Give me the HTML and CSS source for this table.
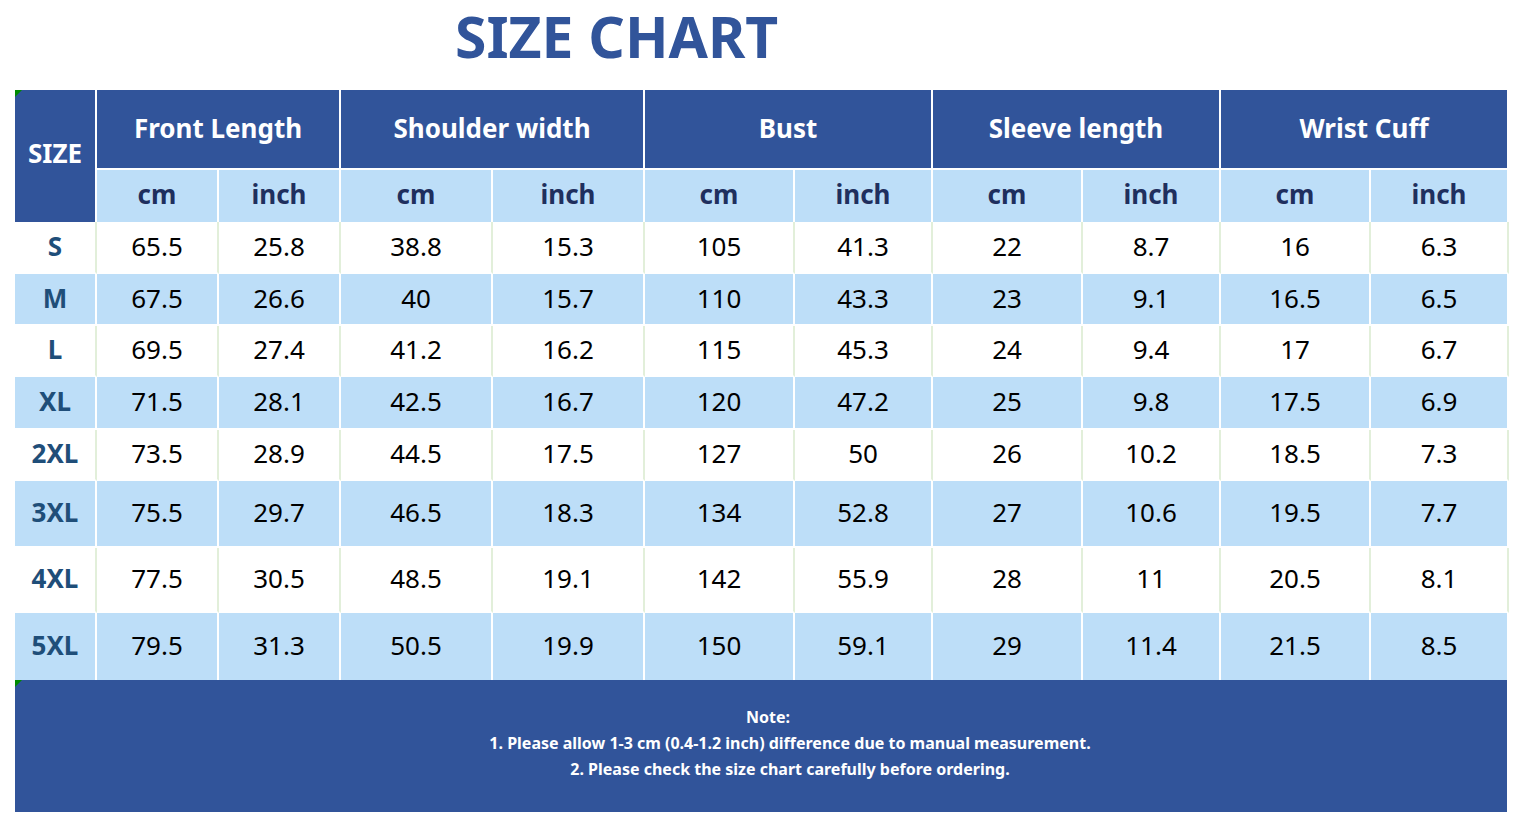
FILE: index.html
```html
<!DOCTYPE html>
<html lang="en">
<head>
<meta charset="utf-8">
<title>Size Chart</title>
<link rel="stylesheet" href="styles.css">
</head>
<body>
<div class="page">
  <div class="title-bar">
    <h1 class="title">SIZE CHART</h1>
  </div>
  <div class="chart">
    <span class="flag"></span>
    <div class="cell head size-head">SIZE</div>
    <div class="cell head group">Front Length</div>
    <div class="cell head group">Shoulder width</div>
    <div class="cell head group">Bust</div>
    <div class="cell head group">Sleeve length</div>
    <div class="cell head group">Wrist Cuff</div>

    <div class="cell sub">cm</div><div class="cell sub">inch</div>
    <div class="cell sub">cm</div><div class="cell sub">inch</div>
    <div class="cell sub">cm</div><div class="cell sub">inch</div>
    <div class="cell sub">cm</div><div class="cell sub">inch</div>
    <div class="cell sub">cm</div><div class="cell sub">inch</div>

    <div class="row plain">
      <div class="cell label">S</div>
      <div class="cell">65.5</div><div class="cell">25.8</div><div class="cell">38.8</div><div class="cell">15.3</div><div class="cell">105</div><div class="cell">41.3</div><div class="cell">22</div><div class="cell">8.7</div><div class="cell">16</div><div class="cell">6.3</div>
    </div>
    <div class="row alt">
      <div class="cell label">M</div>
      <div class="cell">67.5</div><div class="cell">26.6</div><div class="cell">40</div><div class="cell">15.7</div><div class="cell">110</div><div class="cell">43.3</div><div class="cell">23</div><div class="cell">9.1</div><div class="cell">16.5</div><div class="cell">6.5</div>
    </div>
    <div class="row plain">
      <div class="cell label">L</div>
      <div class="cell">69.5</div><div class="cell">27.4</div><div class="cell">41.2</div><div class="cell">16.2</div><div class="cell">115</div><div class="cell">45.3</div><div class="cell">24</div><div class="cell">9.4</div><div class="cell">17</div><div class="cell">6.7</div>
    </div>
    <div class="row alt">
      <div class="cell label">XL</div>
      <div class="cell">71.5</div><div class="cell">28.1</div><div class="cell">42.5</div><div class="cell">16.7</div><div class="cell">120</div><div class="cell">47.2</div><div class="cell">25</div><div class="cell">9.8</div><div class="cell">17.5</div><div class="cell">6.9</div>
    </div>
    <div class="row plain">
      <div class="cell label">2XL</div>
      <div class="cell">73.5</div><div class="cell">28.9</div><div class="cell">44.5</div><div class="cell">17.5</div><div class="cell">127</div><div class="cell">50</div><div class="cell">26</div><div class="cell">10.2</div><div class="cell">18.5</div><div class="cell">7.3</div>
    </div>
    <div class="row alt">
      <div class="cell label">3XL</div>
      <div class="cell">75.5</div><div class="cell">29.7</div><div class="cell">46.5</div><div class="cell">18.3</div><div class="cell">134</div><div class="cell">52.8</div><div class="cell">27</div><div class="cell">10.6</div><div class="cell">19.5</div><div class="cell">7.7</div>
    </div>
    <div class="row plain">
      <div class="cell label">4XL</div>
      <div class="cell">77.5</div><div class="cell">30.5</div><div class="cell">48.5</div><div class="cell">19.1</div><div class="cell">142</div><div class="cell">55.9</div><div class="cell">28</div><div class="cell">11</div><div class="cell">20.5</div><div class="cell">8.1</div>
    </div>
    <div class="row alt last">
      <div class="cell label">5XL</div>
      <div class="cell">79.5</div><div class="cell">31.3</div><div class="cell">50.5</div><div class="cell">19.9</div><div class="cell">150</div><div class="cell">59.1</div><div class="cell">29</div><div class="cell">11.4</div><div class="cell">21.5</div><div class="cell">8.5</div>
    </div>
  </div>
  <div class="note">
    <span class="flag"></span>
    <p class="note-title">Note:</p>
    <p>1. Please allow 1-3 cm (0.4-1.2 inch) difference due to manual measurement.</p>
    <p>2. Please check the size chart carefully before ordering.</p>
  </div>
</div>
</body>
</html>
```
FILE: styles.css
```css
* { box-sizing: border-box; }
html, body { margin: 0; padding: 0; background: #ffffff; }
body { font-family: "Noto Sans", "Open Sans", sans-serif; }

.page {
  width: 1524px;
  padding-left: 15px;
}

.title-bar {
  height: 90px;
  padding-left: 440px;
  padding-top: 1px;
}

.title {
  margin: 0;
  font-size: 57px;
  line-height: 70px;
  font-weight: 700;
  color: #31549a;
  white-space: nowrap;
}

.chart {
  position: relative;
  display: grid;
  width: 1494px;
  grid-template-columns: 82px 122px 122px 152px 152px 150px 138px 150px 138px 150px 138px;
  grid-template-rows: 80px 52px 52px 52px 51px 53px 51px 67px 65px 67px;
}

.row { display: contents; }

.cell {
  display: flex;
  align-items: center;
  justify-content: center;
  border-right: 2px solid #ffffff;
  border-bottom: 2px solid #ffffff;
  font-size: 26px;
  color: #000000;
  padding-bottom: 3px;
}

.head {
  background: #31549a;
  color: #ffffff;
  font-weight: 700;
}
.size-head { grid-row: span 2; border-bottom: none; padding-bottom: 6px; }
.group { grid-column: span 2; padding-bottom: 3px; }

.sub {
  background: #bddef8;
  color: #1f2f5e;
  font-weight: 700;
  border-bottom: none;
  padding-bottom: 4px;
}

.plain .cell { background: #ffffff; border-right-color: #e2efda; }
.alt .cell { background: #bddef8; }
.last .cell { border-bottom: none; }

.label {
  font-weight: 700;
  color: #1f4e79;
}

.flag {
  position: absolute;
  left: 0;
  top: 0;
  width: 0;
  height: 0;
  border-top: 7px solid #008a00;
  border-right: 7px solid transparent;
  z-index: 1;
}

.note {
  position: relative;
  width: 1492px;
  height: 132px;
  background: #31549a;
  color: #ffffff;
  font-weight: 700;
  font-size: 16px;
  line-height: 26px;
  text-align: center;
  padding-top: 24px;
  padding-left: 58px;
  letter-spacing: 0;
}
.note p { margin: 0; }
.note-title { padding-right: 44px; }
```
